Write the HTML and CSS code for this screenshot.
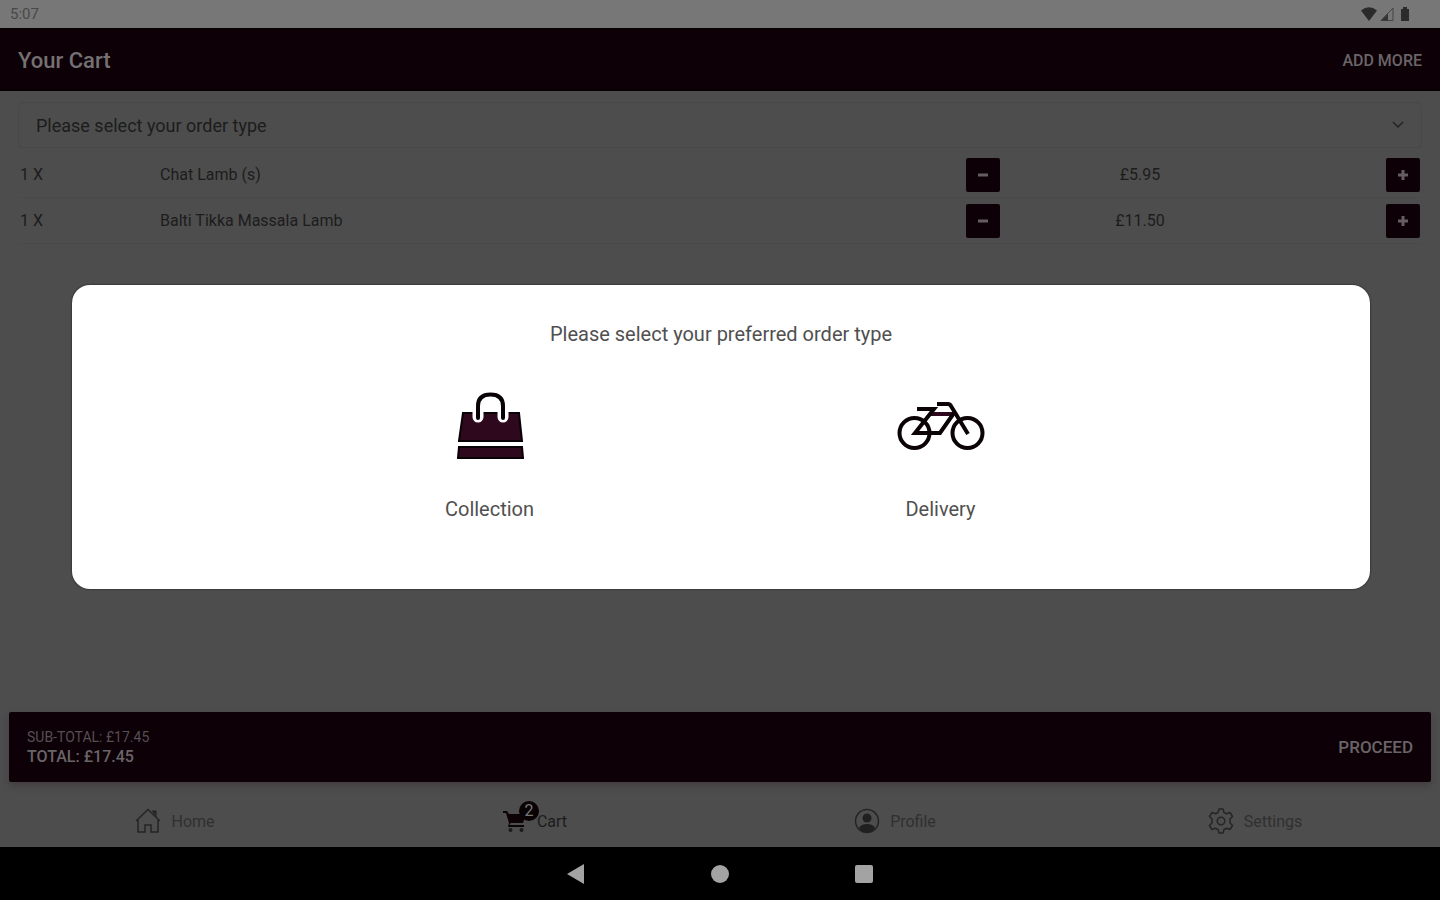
FILE: index.html
```
<!DOCTYPE html>
<html lang="en">
<head>
  <meta charset="UTF-8" />
  <meta name="viewport" content="width=device-width, initial-scale=1" />
  <title>Your Cart</title>
  <link rel="stylesheet" href="styles.css">
</head>
<body>
  <div class="status-bar">
    <span class="clock">5:07</span>
    <div class="status-icons">
      <svg width="18" height="16" viewBox="0 0 18 16"><path d="M1 4.500Q9-2 17 4.500L9 15z" fill="#2b2b2b"/></svg>
      <svg width="16" height="16" viewBox="0 0 16 16"><path d="M2 14.500H14V2z" fill="none" stroke="#444" stroke-width="1"/><path d="M2 14.500H9V7.500z" fill="#333"/></svg>
      <svg class="battery" width="10" height="16" viewBox="0 0 10 16"><path d="M3 1h4v2h2v12H1V3h2z" fill="#2b2b2b"/></svg>
    </div>
  </div>

  <div class="app">
    <header class="header">
      <h1>Your Cart</h1>
      <button class="add-more">ADD MORE</button>
    </header>

    <main class="cart">
      <div class="select-box">
        <select class="order-type" aria-label="Order type">
          <option>Please select your order type</option>
        </select>
        <svg class="chevron" width="14" height="10" viewBox="0 0 14 10"><path d="M2 2l5 5 5-5" fill="none" stroke="#222" stroke-width="1.500"/></svg>
      </div>
      <div class="item">
        <span>1 X</span>
        <span>Chat Lamb (s)</span>
        <button class="qty-btn" aria-label="Remove one"><svg width="12" height="12" viewBox="0 0 12 12"><path d="M1 6h10" stroke="#655d61" stroke-width="3"/></svg></button>
        <span class="price">£5.95</span>
        <button class="qty-btn" aria-label="Add one"><svg width="12" height="12" viewBox="0 0 12 12"><path d="M1 6h10M6 1v10" stroke="#655d61" stroke-width="3"/></svg></button>
      </div>
      <div class="item">
        <span>1 X</span>
        <span>Balti Tikka Massala Lamb</span>
        <button class="qty-btn" aria-label="Remove one"><svg width="12" height="12" viewBox="0 0 12 12"><path d="M1 6h10" stroke="#655d61" stroke-width="3"/></svg></button>
        <span class="price">£11.50</span>
        <button class="qty-btn" aria-label="Add one"><svg width="12" height="12" viewBox="0 0 12 12"><path d="M1 6h10M6 1v10" stroke="#655d61" stroke-width="3"/></svg></button>
      </div>
    </main>

    <div class="checkout">
      <div class="totals">
        <div class="sub-total">SUB-TOTAL: £17.45</div>
        <div class="total">TOTAL: £17.45</div>
      </div>
      <button class="proceed">PROCEED</button>
    </div>

    <nav class="tabs">
      <a class="tab" href="#home">
        <svg width="26" height="26" viewBox="0 0 26 26" fill="none" stroke="#252525" stroke-width="1.500"><path d="M1 13L13 1.500 25 13M3 12v12h7v-7h6v7h7V12"/><path d="M16.500 2.500h5V9z" fill="#252525" stroke="none"/></svg>
        <span>Home</span>
      </a>
      <a class="tab active" href="#cart">
        <span class="cart-icon">
          <svg width="24" height="24" viewBox="0 0 24 24"><path d="M0 2h4l2 3h17l-3 9H7.500l-1 2H21v2H5l1-4L3 4H0z" fill="#0d0307"/><circle cx="7.500" cy="21" r="2" fill="#1c1c1c"/><circle cx="18.500" cy="21" r="2" fill="#1c1c1c"/></svg>
          <span class="badge">2</span>
        </span>
        <span>Cart</span>
      </a>
      <a class="tab" href="#profile">
        <svg width="26" height="26" viewBox="0 0 26 26"><circle cx="13" cy="13" r="11.500" fill="none" stroke="#252525" stroke-width="1.500"/><circle cx="13" cy="10" r="4.500" fill="#202020"/><path d="M5 20q2-4 8-4t8 4q-3 4.500-8 4.500T5 20z" fill="#202020"/></svg>
        <span>Profile</span>
      </a>
      <a class="tab" href="#settings">
        <svg width="26" height="26" viewBox="0 0 26 26" fill="none" stroke="#252525" stroke-width="1.500" stroke-linejoin="round"><path d="M11 1h4l1 3.500 2.500 1.200L22 4.500l2.500 4L22 11v4l2.500 2.500-2.500 4-3.500-1.200L16 21.500 15 25h-4l-1-3.500-2.500-1.200L4 21.500l-2.500-4L4 15v-4L1.500 8.500l2.500-4 3.500 1.200L10 4.500z"/><circle cx="13" cy="13" r="3.800"/></svg>
        <span>Settings</span>
      </a>
    </nav>

    <div class="modal-wrap">
      <div class="modal" role="dialog" aria-labelledby="modal-title">
        <h2 id="modal-title">Please select your preferred order type</h2>
        <div class="choices">
          <button class="choice">
            <svg width="90" height="90" viewBox="0 0 90 90">
              <path d="M18 32h56l3 28H14z" fill="#2e081c" stroke="#080105" stroke-width="2"/>
              <path d="M14 66h63l1 11H13z" fill="#2e081c" stroke="#080105" stroke-width="2"/>
              <path d="M33 30v6M58 30v6" stroke="#fff" stroke-width="11" stroke-linecap="round"/>
              <path d="M33 37V25q0-11.500 12.500-11.500T58 25v12" fill="none" stroke="#080105" stroke-width="4" stroke-linecap="round"/>
            </svg>
            <span>Collection</span>
          </button>
          <button class="choice">
            <svg width="90" height="90" viewBox="0 0 90 90" fill="none" stroke="#0b0306" stroke-width="4">
              <circle cx="18.500" cy="52" r="15"/>
              <circle cx="71.500" cy="52" r="15"/>
              <path d="M35 33h23" stroke="#2e081c"/>
              <path d="M21 28h17L19 52h25l14-20"/>
              <path d="M41 23h11q2 0 3 2l17 28"/>
            </svg>
            <span>Delivery</span>
          </button>
        </div>
      </div>
    </div>
  </div>

  <div class="nav-bar">
    <button aria-label="Back"><svg width="20" height="20" viewBox="0 0 20 20"><path d="M1 10L18 0v20z" fill="#a3a3a3"/></svg></button>
    <button aria-label="Home screen"><svg width="20" height="20" viewBox="0 0 20 20"><circle cx="10" cy="10" r="9" fill="#a3a3a3"/></svg></button>
    <button aria-label="Recent apps"><svg width="20" height="20" viewBox="0 0 20 20"><rect x="1" y="1" width="18" height="18" rx="2" fill="#a3a3a3"/></svg></button>
  </div>
</body>
</html>
```
FILE: styles.css
```
* {
  box-sizing: border-box;
}
body {
  margin: 0;
  min-height: 100vh;
  display: flex;
  flex-direction: column;
  font-family: Roboto, sans-serif;
  background: #4d4d4d;
  color: #1c1c1c;
}
h1, h2 {
  margin: 0;
}
button {
  padding: 0;
  border: none;
  background: none;
  font-family: inherit;
  cursor: pointer;
}
svg {
  display: block;
}

/* Android status bar */
.status-bar {
  display: flex;
  justify-content: space-between;
  align-items: center;
  height: 28px;
  padding: 0 30px 0 10px;
  background: #777;
}
.clock {
  font-size: 15px;
  color: #484848;
}
.status-icons {
  display: flex;
  gap: 1px;
}
.battery {
  margin-left: 4px;
}

.app {
  position: relative;
  flex: 1;
  display: flex;
  flex-direction: column;
}
.header {
  display: flex;
  justify-content: space-between;
  align-items: center;
  height: 63px;
  padding: 0 18px;
  background: #0e0007;
  border-top: 2px solid #050002;
  border-bottom: 1px solid #050002;
}
.header h1 {
  font-size: 22px;
  font-weight: 500;
  color: #757173;
}
.add-more {
  font-size: 16px;
  font-weight: 500;
  color: #696567;
}

/* Cart list */
.cart {
  flex: 1;
  padding: 11px 20px 10px;
}
.select-box {
  position: relative;
  margin: 0 -2px 4px;
}
.order-type {
  appearance: none;
  display: block;
  width: 100%;
  height: 46px;
  padding: 0 17px;
  border: 1px solid #484848;
  border-radius: 4px;
  background: #4d4d4d;
  font-family: inherit;
  font-size: 18px;
  color: #1c1c1c;
}
.chevron {
  position: absolute;
  right: 17px;
  top: 18px;
}
.item {
  display: grid;
  grid-template-columns: 10% 50% 10% 20% 10%;
  align-items: center;
  height: 46px;
  border-bottom: 1px solid #494949;
  font-size: 16px;
}
.qty-btn {
  display: flex;
  justify-content: center;
  align-items: center;
  justify-self: end;
  width: 34px;
  height: 34px;
  border-radius: 2px;
  background: #0e0007;
}
.price {
  text-align: center;
}

/* Totals */
.checkout {
  display: flex;
  justify-content: space-between;
  align-items: center;
  height: 70px;
  margin: 0 9px 8px;
  padding: 0 18px;
  border-radius: 2px;
  background: #0e0007;
  box-shadow: 0 4px 6px #443f41;
}
.sub-total {
  font-size: 14px;
  line-height: 20px;
  color: #554f52;
}
.total {
  font-size: 16px;
  font-weight: 500;
  line-height: 20px;
  color: #696567;
}
.proceed {
  font-size: 17px;
  font-weight: 500;
  color: #696567;
}

/* Bottom tabs */
.tabs {
  display: grid;
  grid-template-columns: repeat(4, 1fr);
  height: 57px;
  padding-top: 5px;
}
.tab {
  display: flex;
  justify-content: center;
  align-items: center;
  gap: 10px;
  padding-right: 10px;
  font-size: 16px;
  color: #303030;
  text-decoration: none;
}
.active {
  color: #1c1c1c;
}
.cart-icon {
  position: relative;
}
.badge {
  position: absolute;
  top: -8px;
  left: 16px;
  width: 20px;
  height: 20px;
  border-radius: 50%;
  background: #090205;
  color: #777;
  font-size: 16px;
  line-height: 20px;
  text-align: center;
}

/* Order type popup */
.modal-wrap {
  position: absolute;
  inset: 0;
  display: flex;
  align-items: center;
  padding: 0 70px 2px 72px;
}
.modal {
  flex: 1;
  height: 304px;
  padding: 35px 198px 0;
  border-radius: 18px;
  background: #fff;
  box-shadow: 0 0 2px #111;
}
.modal h2 {
  font-size: 20px;
  font-weight: 400;
  line-height: 28px;
  text-align: center;
  color: #505050;
}
.choices {
  display: grid;
  grid-template-columns: 1fr 1fr;
  margin: 33px 6px 0 -6px;
}
.choice {
  display: flex;
  flex-direction: column;
  align-items: center;
  gap: 24px;
  font-size: 20px;
  line-height: 28px;
  color: #505050;
}

/* Android navigation */
.nav-bar {
  display: flex;
  justify-content: center;
  align-items: center;
  gap: 124px;
  height: 53px;
  background: #000;
}
```
